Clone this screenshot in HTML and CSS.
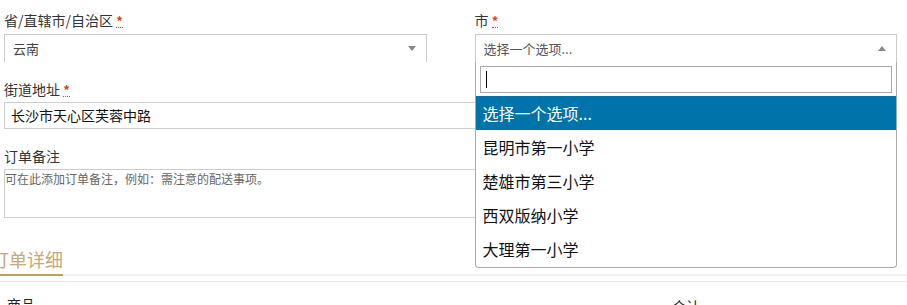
FILE: index.html
```html
<!DOCTYPE html>
<html lang="zh-CN">
<head>
<meta charset="UTF-8" />
<title>结算</title>
<link rel="stylesheet" href="styles.css">
</head>
<body>
<div class="checkout">
  <div class="field-row">
    <!-- Province -->
    <div class="field">
      <label>省/直辖市/自治区 <abbr class="required" title="必填">*</abbr></label>
      <div class="select-box">
        <span class="select-text">云南</span>
        <span class="arrow down"></span>
      </div>
    </div>
    <!-- City (open dropdown) -->
    <div class="field city">
      <label>市 <abbr class="required" title="必填">*</abbr></label>
      <div class="select-box open">
        <span class="select-text muted">选择一个选项...</span>
        <span class="arrow up"></span>
      </div>
      <div class="dropdown">
        <div class="search"><span class="caret"></span></div>
        <ul class="options">
          <li class="highlighted">选择一个选项...</li>
          <li>昆明市第一小学</li>
          <li>楚雄市第三小学</li>
          <li>西双版纳小学</li>
          <li>大理第一小学</li>
        </ul>
      </div>
    </div>
  </div>

  <div class="field wide">
    <label>街道地址 <abbr class="required" title="必填">*</abbr></label>
    <div class="text-input">长沙市天心区芙蓉中路</div>
  </div>

  <div class="field wide">
    <label>订单备注</label>
    <div class="textarea">可在此添加订单备注，例如：需注意的配送事项。</div>
  </div>
</div>

<!-- Order details -->
<div class="order-title">
  <h3>订单详细</h3>
  <div class="title-line"><span></span></div>
</div>
<div class="order-table">
  <span class="col-product">商品</span>
  <span class="col-total">合计</span>
</div>
</body>
</html>
```

FILE: styles.css
```css
body {
  margin: 0;
  font-family: "Noto Sans CJK SC", "Noto Sans", sans-serif;
  color: #333;
  background: #fff;
  overflow: hidden;
}
.checkout {
  padding: 0 10px 0 4px;
}
.field-row {
  display: grid;
  grid-template-columns: 1fr 1fr;
  gap: 48px;
}
.field {
  position: relative;
}
label {
  display: block;
  font-size: 14px;
  line-height: 20px;
  margin: 10px 0 4px;
  color: #333;
}
.wide label {
  margin: 17px 0 3px;
}
.required {
  color: #e2401c;
  text-decoration: none;
  border-bottom: 1px dotted #e2401c;
  font-weight: bold;
  font-size: 13px;
  line-height: 12px;
  display: inline-block;
}
/* Select */
.select-box {
  height: 27px;
  border: 1px solid #ccc;
  border-bottom: none;
  display: flex;
  align-items: center;
  justify-content: space-between;
  padding: 0 8px;
}
.select-text {
  font-size: 13px;
  color: #444;
}
.select-text.muted {
  color: #555;
}
.arrow {
  width: 0;
  height: 0;
  border-left: 4px solid transparent;
  border-right: 4px solid transparent;
  margin-right: 2px;
}
.arrow.down {
  border-top: 5px solid #888;
}
.arrow.up {
  border-bottom: 5px solid #888;
}
/* Dropdown */
.dropdown {
  position: absolute;
  left: 0;
  right: 0;
  top: 62px;
  background: #fff;
  border: 1px solid #aaa;
  border-top: none;
  border-radius: 0 0 4px 4px;
  z-index: 5;
}
.search {
  margin: 4px 4px 3px;
  height: 25px;
  border: 1px solid #aaa;
  display: flex;
  align-items: center;
  padding-left: 5px;
}
.caret {
  width: 1px;
  height: 17px;
  background: #000;
}
.options {
  list-style: none;
  margin: 0;
  padding: 0 0 1px;
}
.options li {
  height: 34px;
  line-height: 34px;
  padding-left: 7px;
  font-size: 16px;
  color: #111;
}
.options li.highlighted {
  background: #0073aa;
  color: #fff;
}
/* Inputs */
.text-input {
  height: 25px;
  border: 1px solid #ccc;
  font-size: 14px;
  line-height: 25px;
  padding-left: 6px;
  color: #111;
}
.textarea {
  height: 47px;
  border: 1px solid #ccc;
  font-size: 12px;
  line-height: 18px;
  padding-left: 0;
  color: #666;
}
/* Order details */
.order-title {
  margin-top: 29px;
}
.order-title h3 {
  margin: 0 0 0 -9px;
  font-size: 18px;
  font-weight: normal;
  line-height: 24px;
  color: #c8a878;
  height: 27px;
}
.title-line {
  height: 2px;
  background: #f2f2f2;
}
.title-line span {
  display: block;
  width: 63px;
  height: 2px;
  background: #bf9d6b;
}
.order-table {
  border-top: 1px solid #e6e6e6;
  margin-top: 5px;
  position: relative;
  height: 30px;
  font-size: 14px;
  color: #222;
}
.col-product {
  position: absolute;
  left: 7px;
  top: 12px;
}
.col-total {
  position: absolute;
  left: 672px;
  top: 14px;
}
```
